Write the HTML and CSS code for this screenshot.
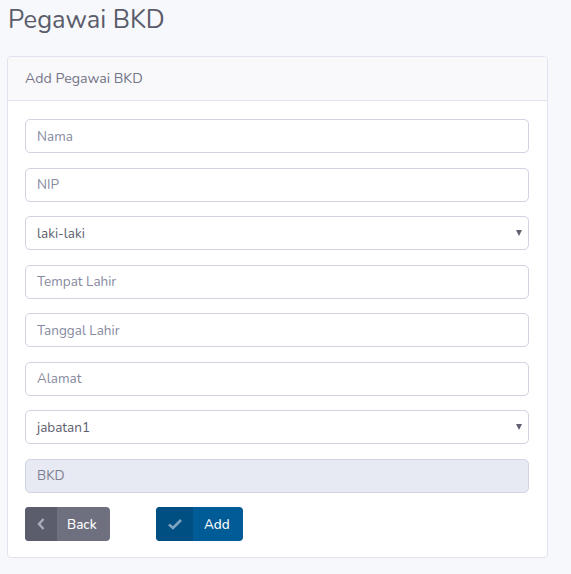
FILE: index.html
```html
<!DOCTYPE html>
<html>
<head>
<meta charset="utf-8">
<link rel="stylesheet" href="styles.css">
</head>
<body>
<h1 class="title">Pegawai BKD</h1>
<div class="card">
  <div class="card-header">Add Pegawai BKD</div>
  <div class="card-body">
    <input class="field" type="text" placeholder="Nama">
    <input class="field" type="text" placeholder="NIP">
    <div class="select"><span>laki-laki</span><span class="caret"></span></div>
    <input class="field" type="text" placeholder="Tempat Lahir">
    <input class="field" type="text" placeholder="Tanggal Lahir">
    <input class="field" type="text" placeholder="Alamat">
    <div class="select"><span>jabatan1</span><span class="caret"></span></div>
    <div class="field disabled">BKD</div>
    <div class="actions">
      <button class="btn btn-back"><span class="btn-icon"><svg width="10" height="14" viewBox="0 0 10 14"><path d="M7.5 2 L3 7 L7.5 12" fill="none" stroke="#a9abbd" stroke-width="2.4"/></svg></span><span class="btn-text">Back</span></button>
      <button class="btn btn-add"><span class="btn-icon"><svg width="16" height="14" viewBox="0 0 16 14"><path d="M2 7.5 L6 11 L14 3" fill="none" stroke="#7fa3c2" stroke-width="2.6"/></svg></span><span class="btn-text">Add</span></button>
    </div>
  </div>
</div>
</body>
</html>
```

FILE: styles.css
```css
html, body { margin: 0; padding: 0; }
body {
  background: #f7f8fc;
  font-family: "Nunito", "Open Sans", "Noto Sans", sans-serif;
  color: #5a5c69;
  width: 571px;
  height: 574px;
  overflow: hidden;
}
.title {
  margin: 3px 0 0 8px;
  font-size: 25.5px;
  font-weight: 400;
  line-height: 33px;
  color: #5a5c6a;
}
.card {
  margin: 20px 0 0 7px;
  width: 541px;
  height: 502px;
  background: #fff;
  border: 1px solid #e2e3ef;
  border-radius: 4px;
  box-sizing: border-box;
}
.card-header {
  height: 44px;
  box-sizing: border-box;
  padding: 0 17px;
  display: flex;
  align-items: center;
  font-size: 14.2px;
  color: #737587;
  background: #f9f9fc;
  border-bottom: 1px solid #e2e3ef;
  border-radius: 4px 4px 0 0;
}
.card-body {
  padding: 18px 17px 0 17px;
  display: flex;
  flex-direction: column;
  gap: 14.5px;
}
.field, .select {
  display: flex;
  align-items: center;
  width: 504px;
  height: 34px;
  box-sizing: border-box;
  border: 1px solid #d1d2e2;
  border-radius: 5px;
  padding: 0 11px;
  font-family: inherit;
  font-size: 13.5px;
  color: #6e7080;
  background: #fff;
  outline: none;
  margin: 0;
}
.field::placeholder { color: #878aa0; }
.select { justify-content: space-between; padding-right: 6px; color: #5c5e6e; }
.caret {
  width: 0; height: 0;
  border-left: 3.5px solid transparent;
  border-right: 3.5px solid transparent;
  border-top: 6px solid #5f6170;
}
.disabled { background: #e8eaf3; color: #7d7f90; }
.actions {
  display: flex;
  gap: 46px;
  margin-top: 0;
}
.btn {
  display: flex;
  height: 34px;
  padding: 0;
  border: none;
  border-radius: 4px;
  overflow: hidden;
  font-family: inherit;
  font-size: 13.5px;
  font-weight: 500;
  color: #fff;
  cursor: pointer;
}
.btn-icon { display: flex; align-items: center; justify-content: center; height: 100%; }
.btn-text { display: flex; align-items: center; height: 100%; }
.btn-back { width: 85px; background: #6e6f7f; }
.btn-back .btn-icon { width: 32px; background: #5c5d6c; }
.btn-back .btn-text { padding-left: 10px; }
.btn-add { width: 87px; background: #015b96; }
.btn-add .btn-icon { width: 37px; background: #004f82; }
.btn-add .btn-text { padding-left: 11px; }
```
